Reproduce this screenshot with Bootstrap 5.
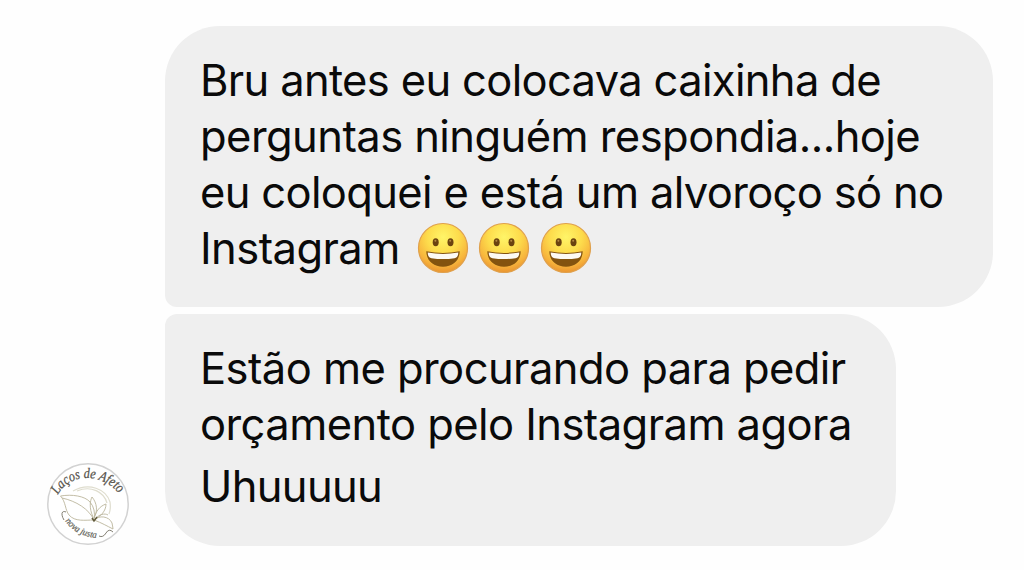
<!DOCTYPE html>
<html lang="pt-BR">
<head>
<meta charset="utf-8">
<meta name="viewport" content="width=device-width, initial-scale=1">
<title>Mensagens</title>
<link href="https://cdn.jsdelivr.net/npm/bootstrap@5.3.0/dist/css/bootstrap.min.css" rel="stylesheet">
<style>
  body { font-family: Inter, "Liberation Sans", sans-serif; background: #fefefe; color: #0a0a0a; }
  .chat { height: 570px; padding: 26px 0 0 47px; }
  .avatar { width: 82px; height: 82px; margin-right: 35.5px; margin-bottom: 25px; }
  .thread { gap: 7px; }
  .bubble { background: #efefef; padding: 26px 0 0 35.5px; font-size: 43.5px; line-height: 56px; letter-spacing: -.56px; white-space: nowrap; }
  .bubble-first { width: 828px; height: 280.5px; border-radius: 55px 55px 55px 12px; }
  .bubble-last { width: 731px; height: 232px; border-radius: 12px 55px 55px 55px; }
  .tight { letter-spacing: -.66px; }
  .shout { margin-top: 6px; }
  .emoji { width: 52px; height: 52px; }
  .emoji-row { gap: 9.7px; margin-left: 17px; }
  .script { font-family: "Liberation Serif", serif; font-style: italic; letter-spacing: 0; }
</style>
</head>
<body>
<svg width="0" height="0" class="position-absolute" aria-hidden="true">
  <defs>
    <radialGradient id="face" cx="50%" cy="28%" r="72%">
      <stop offset="0" stop-color="#fff568"/><stop offset=".45" stop-color="#fddc4c"/><stop offset=".8" stop-color="#f7b43c"/><stop offset="1" stop-color="#ea9430"/>
    </radialGradient>
    <symbol id="grin" viewBox="0 0 52 52">
      <circle cx="26" cy="26" r="24.5" fill="url(#face)" stroke="#dfa04c" stroke-width="1.2"/>
      <ellipse cx="18.7" cy="20.2" rx="3" ry="4" fill="#6b4310"/><ellipse cx="33.5" cy="20.2" rx="3" ry="4" fill="#6b4310"/>
      <circle cx="18.4" cy="18.8" r="1" fill="#b58a45"/><circle cx="33.2" cy="18.8" r="1" fill="#b58a45"/>
      <path d="M9.3 29.3Q26 32.5 42.7 29.3C42.5 39 35.5 44.7 26 44.7S9.5 39 9.3 29.3Z" fill="#83530f"/>
      <path d="M10.7 30.5Q26 33.3 41.3 30.5C41.2 34.5 39.8 35.8 37.5 36.2Q26 38 14.5 36.2C12.2 35.8 10.8 34.5 10.7 30.5Z" fill="#fdfaf4"/>
    </symbol>
  </defs>
</svg>
<main class="chat d-flex align-items-start">
  <svg class="avatar flex-shrink-0 align-self-end" viewBox="0 0 82 82" role="img" aria-label="Laços de Afeto">
    <defs>
      <path id="arcTop" d="M11 32C22 10 56 8 75 34"/>
      <path id="arcLow" d="M18 58Q30 74 51 75"/>
    </defs>
    <circle cx="41" cy="41" r="40.2" fill="#fff" stroke="#d2d2d2" stroke-width="1.5"/>
    <path d="M26 28C42 19 59 26 63 39Q64 46 62 51M30 28C44 22 57 29 60 40" fill="none" stroke="#dfddce" stroke-width="1.2"/>
    <g fill="none" stroke="#bbb69c" stroke-width=".9">
      <path d="M13.5 33C25 31 38 33 43 39Q49 46 47 57C38 57 28 59 22 52C18 47 19 39 13.500 33Z"/>
      <path d="M15 35C29 38 42 46 47 57M47 57C52 52 62 53 65 60Q66 65 66 66C60 63 55 60 47 57"/>
      <path d="M46 54C42 45 43 38 45 34C50 40 51 48 47 55C49 48 53 43 59 41C59 48 54 53 47 57C52 51 58 50 61 52"/>
    </g>
    <path d="M45 55L47 58 50 54" fill="none" stroke="#625b3c" stroke-width="1.5"/>
    <path d="M19 49C14 47 14 52 17 57M52 73Q56 75 59 70T66 69" fill="none" stroke="#837f73" stroke-width="1"/>
    <text class="script" font-size="14.5" fill="#55524a" stroke="#55524a" stroke-width=".25"><textPath href="#arcTop" textLength="72" lengthAdjust="spacingAndGlyphs">Laços de Afeto</textPath></text>
    <text class="script" font-size="9.5" fill="#625f56" stroke="#625f56" stroke-width=".2"><textPath href="#arcLow" textLength="37" lengthAdjust="spacingAndGlyphs">nova justa</textPath></text>
  </svg>
  <section class="thread d-flex flex-column">
    <div class="bubble bubble-first">
      <div class="tight">Bru antes eu colocava caixinha de</div>
      <div>perguntas ninguém respondia...hoje</div>
      <div class="tight">eu coloquei e está um alvoroço só no</div>
      <div class="d-flex align-items-center"><span>Instagram</span>
        <span class="emoji-row d-flex">
          <svg class="emoji"><use href="#grin"/></svg><svg class="emoji"><use href="#grin"/></svg><svg class="emoji"><use href="#grin"/></svg>
        </span>
      </div>
    </div>
    <div class="bubble bubble-last">
      <div>Estão me procurando para pedir</div>
      <div>orçamento pelo Instagram agora</div>
      <div class="shout tight">Uhuuuuu</div>
    </div>
  </section>
</main>
<script src="https://cdn.jsdelivr.net/npm/bootstrap@5.3.0/dist/js/bootstrap.bundle.min.js"></script>
</body>
</html>
